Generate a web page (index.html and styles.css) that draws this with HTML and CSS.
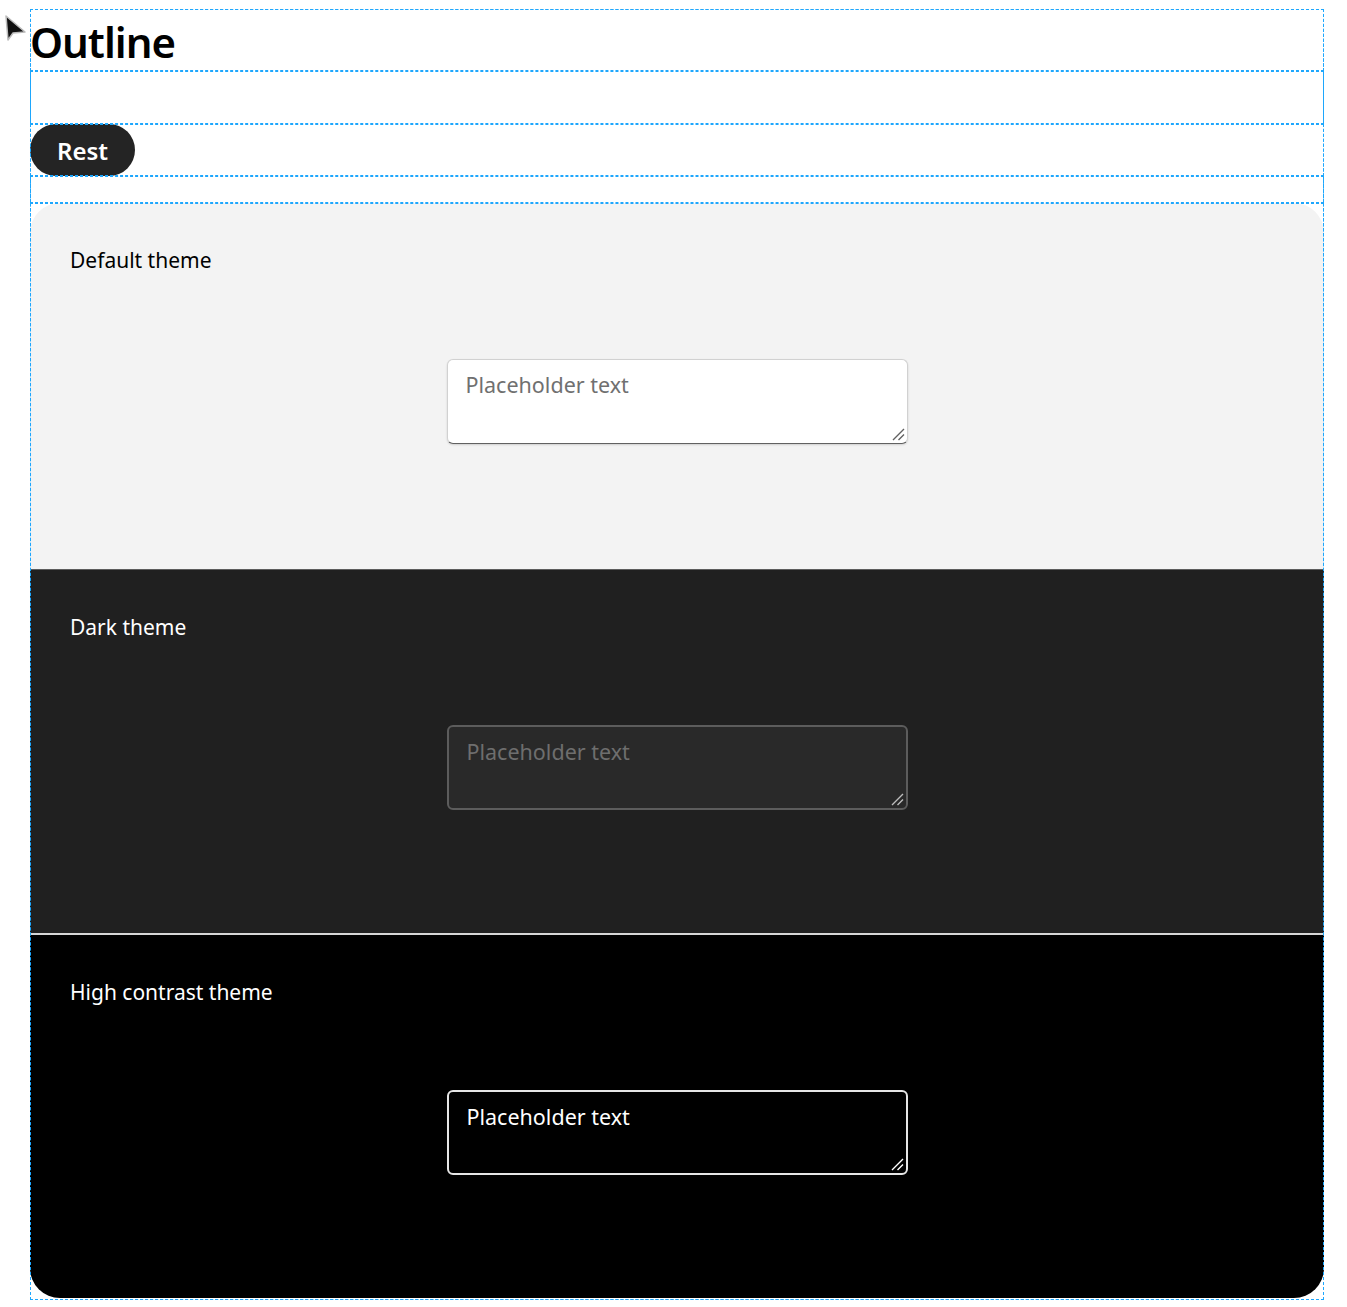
FILE: index.html
```html
<!DOCTYPE html>
<html lang="en">
<head>
    <meta charset="UTF-8">
    <meta name="viewport" content="width=device-width, initial-scale=1.0">
    <title>Textarea - Outline</title>
    <link rel="stylesheet" href="styles.css">
</head>
<body>
    <!-- pointer left over from the capture -->
    <svg class="cursor" width="26" height="32" viewBox="0 0 26 32">
        <path d="M2 2 L4 26 L9 19 L21 18 Z" fill="#111" stroke="#bbb" stroke-width="1.5" stroke-linejoin="round"/>
    </svg>

    <div class="story">
        <h1 class="title">Outline</h1>
        <div class="blank"></div>
        <div class="state-row">
            <button class="state" type="button">Rest</button>
        </div>
        <div class="gap"></div>

        <div class="themes">
            <section class="theme theme-default">
                <div class="theme-label">Default theme</div>
                <div class="stage">
                    <span class="field">
                        <textarea placeholder="Placeholder text"></textarea>
                        <svg class="grip" width="15" height="15" viewBox="0 0 15 15"><path d="M2 13 L13 2 M7.5 13 L13 7.5" stroke-width="1.4"/></svg>
                    </span>
                </div>
            </section>
            <section class="theme theme-dark">
                <div class="theme-label">Dark theme</div>
                <div class="stage">
                    <span class="field">
                        <textarea placeholder="Placeholder text"></textarea>
                        <svg class="grip" width="15" height="15" viewBox="0 0 15 15"><path d="M2 13 L13 2 M7.5 13 L13 7.5" stroke-width="1.4"/></svg>
                    </span>
                </div>
            </section>
            <section class="theme theme-hc">
                <div class="theme-label">High contrast theme</div>
                <div class="stage">
                    <span class="field">
                        <textarea placeholder="Placeholder text"></textarea>
                        <svg class="grip" width="15" height="15" viewBox="0 0 15 15"><path d="M2 13 L13 2 M7.5 13 L13 7.5" stroke-width="1.4"/></svg>
                    </span>
                </div>
            </section>
        </div>
    </div>
</body>
</html>
```

FILE: styles.css
```css
body {
    margin: 0;
    padding: 9px 0 0 30px;
    background: #fff;
    font-family: "Noto Sans", "Open Sans", sans-serif;
    color: #000;
}

.cursor {
    position: absolute;
    left: 4px;
    top: 14px;
}

/* Storybook outline addon look */
.story,
.story > * {
    outline: 1px dashed #1ea7fd;
    outline-offset: -1px;
}

.story {
    width: 1294px;
}

.title {
    margin: 0;
    height: 62px;
    font-size: 42px;
    font-weight: 600;
    line-height: 66px;
    letter-spacing: -1px;
}

.blank {
    height: 53px;
}

.state-row {
    height: 52px;
}

.state {
    height: 52px;
    padding: 0 27px;
    border: none;
    border-radius: 26px;
    background: #242424;
    color: #fff;
    font-family: inherit;
    font-size: 24px;
    font-weight: 600;
}

.gap {
    height: 27px;
}

/* Theme panels */
.themes {
    display: flex;
    flex-direction: column;
    padding-bottom: 2px;
}

.theme {
    height: 366px;
    box-sizing: border-box;
    padding: 43px 40px 40px;
    display: flex;
    flex-direction: column;
}

.theme-label {
    font-size: 21px;
    line-height: 28px;
}

.stage {
    flex: 1;
    display: flex;
    align-items: center;
    justify-content: center;
}

.field {
    position: relative;
    display: block;
    width: 461px;
    height: 85px;
    box-sizing: border-box;
    border-radius: 6px;
}

.field textarea {
    display: block;
    width: 100%;
    height: 100%;
    box-sizing: border-box;
    padding: 11px 18px;
    border: none;
    background: transparent;
    font-family: inherit;
    font-size: 21.5px;
    line-height: 28px;
    resize: none;
    outline: none;
}

.grip {
    position: absolute;
    right: 1px;
    bottom: 1px;
    fill: none;
}

.theme-default {
    background: #f3f3f3;
    border-radius: 30px 30px 0 0;
}

.theme-default .field {
    background: #fff;
    border: 1px solid #d1d1d1;
    border-bottom-color: #616161;
    box-shadow: 0 1px 2px rgba(0, 0, 0, 0.15);
}

.theme-default .field textarea::placeholder {
    color: #707070;
}

.theme-default .grip {
    stroke: #616161;
}

.theme-dark {
    background: #202020;
    color: #fff;
    border-top: 1px solid #5c5c5c;
    border-bottom: 2px solid #d6d6d6;
}

.theme-dark .field {
    background: #292929;
    border: 2px solid #5c5c5c;
}

.theme-dark .field textarea {
    color: #fff;
}

.theme-dark .field textarea::placeholder {
    color: #6e6e6e;
}

.theme-dark .grip {
    stroke: #bdbdbd;
}

.theme-hc {
    height: 363px;
    background: #000;
    color: #fff;
    border-radius: 0 0 30px 30px;
}

.theme-hc .field {
    background: #000;
    border: 2px solid #e6e6e6;
}

.theme-hc .field textarea {
    color: #fff;
}

.theme-hc .field textarea::placeholder {
    color: #fff;
}

.theme-hc .grip {
    stroke: #fff;
}
```
